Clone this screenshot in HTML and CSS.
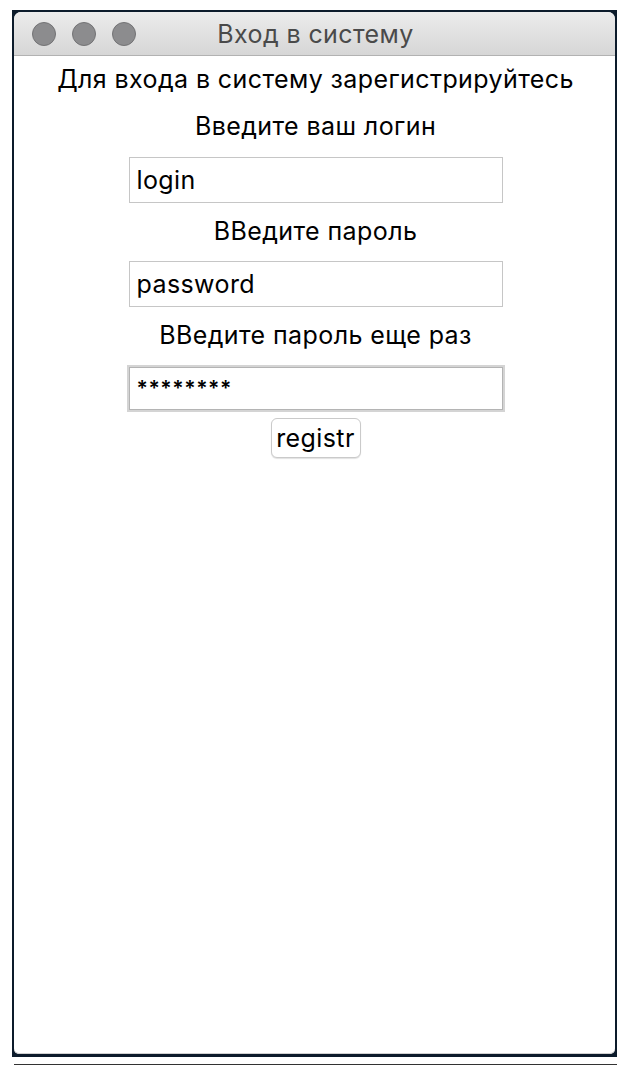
FILE: index.html
```html
<!DOCTYPE html>
<html lang="ru">
<head>
<meta charset="utf-8">
<title>Вход в систему</title>
<link rel="stylesheet" href="styles.css">
</head>
<body>
<div class="desktop">
  <div class="window">
    <div class="titlebar">
      <div class="lights">
        <span class="light"></span>
        <span class="light"></span>
        <span class="light"></span>
      </div>
      <div class="title">Вход в систему</div>
    </div>
    <div class="content">
      <div class="label first">Для входа в систему зарегистрируйтесь</div>
      <div class="label second">Введите ваш логин</div>
      <input class="field" type="text" value="login">
      <div class="label">ВВедите пароль</div>
      <input class="field" type="text" value="password">
      <div class="label">ВВедите пароль еще раз</div>
      <input class="field focused" type="text" value="********">
      <button class="btn" type="button">registr</button>
    </div>
  </div>
</div>
<div class="baseline"></div>
</body>
</html>
```

FILE: styles.css
```css
html, body {
  margin: 0;
  padding: 0;
  background: #ffffff;
}

body {
  font-family: Inter, "Noto Sans", "Liberation Sans", sans-serif;
  color: #000;
}

.desktop {
  margin: 10px 0 0 12px;
  width: 605px;
  height: 1047px;
  background: #0c1b2b;
  padding: 2px 2px 3px 2px;
  box-sizing: border-box;
}

.window {
  height: 100%;
  background: #ffffff;
  border-radius: 7px 7px 5px 5px;
  overflow: hidden;
  display: flex;
  flex-direction: column;
  box-shadow: inset 0 -1px 0 #d0d0d0;
}

.titlebar {
  position: relative;
  height: 43px;
  background: linear-gradient(#ececec, #d6d6d6);
  border-bottom: 1px solid #b2b2b2;
  display: flex;
  align-items: center;
  justify-content: center;
  flex-shrink: 0;
}

.lights {
  position: absolute;
  left: 18px;
  top: 10px;
  display: flex;
  gap: 16px;
}

.light {
  width: 22px;
  height: 22px;
  border-radius: 50%;
  background: #8c8c8e;
  border: 1px solid #737375;
}

.title {
  font-size: 25px;
  color: #4a4a4a;
  letter-spacing: 0.4px;
  margin-left: 2px;
}

.content {
  display: flex;
  flex-direction: column;
  align-items: center;
  padding-left: 2px;
}

.label {
  font-size: 25px;
  letter-spacing: 0.4px;
  line-height: 28px;
  height: 28px;
  margin: 14px 0 16px;
  white-space: nowrap;
}

.label.first {
  margin: 9px 0 0;
}

.label.second {
  margin: 19px 0 17px;
}

.field {
  box-sizing: border-box;
  width: 374px;
  height: 46px;
  border: 1px solid #c6c6c6;
  padding: 0 7px;
  font-family: Inter, "Noto Sans", "Liberation Sans", sans-serif;
  font-size: 25px;
  letter-spacing: 0.4px;
  color: #000;
  background: #fff;
  outline: none;
  margin: 0;
}

.field.focused {
  height: 43px;
  border-color: #b4b4b4;
  box-shadow: 0 0 0 2px #d4d4d4;
  margin-top: 2px;
  font-size: 21px;
  font-weight: 600;
  letter-spacing: 0.6px;
}

.btn {
  margin-top: 8px;
  width: 90px;
  height: 40px;
  border: 1px solid #cacaca;
  border-radius: 6px;
  background: #fff;
  box-shadow: 0 1px 1px rgba(0, 0, 0, 0.12);
  font-family: Inter, "Noto Sans", "Liberation Sans", sans-serif;
  font-size: 25px;
  letter-spacing: 0.4px;
  color: #000;
  padding: 0;
}

.baseline {
  margin: 7px 0 0 14px;
  width: 603px;
  height: 1px;
  background: #333;
}
```
